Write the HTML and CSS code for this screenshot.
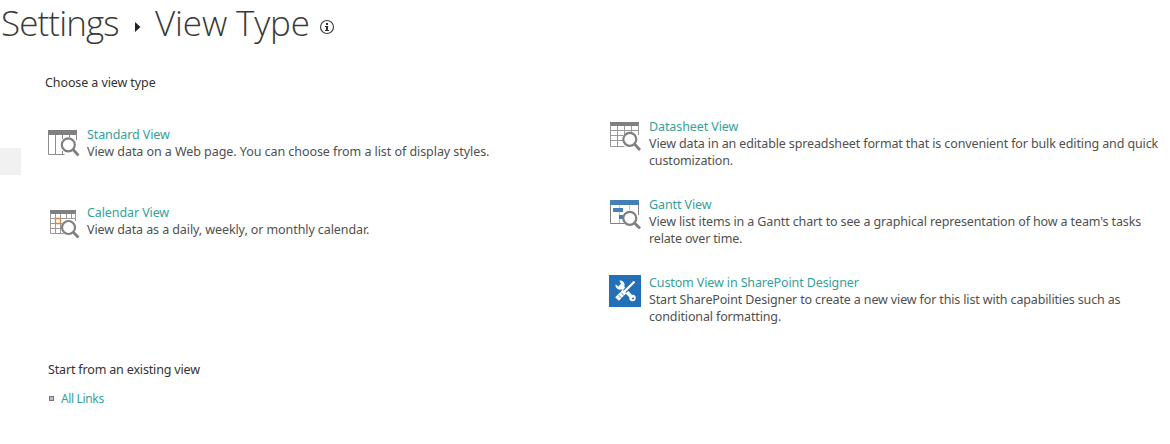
FILE: index.html
```html
<!DOCTYPE html>
<html lang="en">
<head>
<meta charset="utf-8">
<title>View Type</title>
<link rel="stylesheet" href="styles.css">
</head>
<body>
<header class="title">
  <span class="crumb">Settings</span>
  <svg class="arrow" width="6" height="10" viewBox="0 0 6 10"><path d="M0 0L5.500 5L0 10z" fill="#222"/></svg>
  <h1 class="page">View Type</h1>
  <svg class="info" width="16" height="16" viewBox="0 0 16 16"><circle cx="8" cy="8" r="6.500" fill="none" stroke="#444" stroke-width="1.200"/><path d="M7 4h2v2H7zM6 7h3v4h1v1H6v-1h1V8H6z" fill="#333"/></svg>
</header>
<div class="layout">
  <nav class="side"><div class="selected"></div></nav>
  <main class="content">
    <h2 class="heading">Choose a view type</h2>
    <div class="types">
      <div class="type left">
        <svg class="icon" width="32" height="32" viewBox="0 0 32 32">
          <path d="M0 2h29v5H0z" fill="#808080"/>
          <path d="M.5 6v20.500h16M28.500 6v6M7.500 7v19M14.500 7v4M14.500 23v3M21.500 7v2" fill="none" stroke="#8c8c8c"/>
          <circle cx="20.300" cy="16.800" r="6.500" fill="#fff" stroke="#808080" stroke-width="2.200"/><path d="M25 21.500L30.500 27.500" stroke="#808080" stroke-width="2.800"/>
        </svg>
        <div class="text"><a class="name n1">Standard View</a><p class="desc d1">View data on a Web page. You can choose from a list of display styles.</p></div>
      </div>
      <div class="type">
        <svg class="icon" width="32" height="32" viewBox="0 0 32 32">
          <path d="M1 3h29v4H1z" fill="#808080"/>
          <path d="M1.500 6v21.500h14M29.500 6v10M8.500 7v20M15.500 7v8M22.500 7v6M2 11.500h27M2 16.500h12M2 21.500h12" fill="none" stroke="#999"/>
          <circle cx="20.800" cy="20.300" r="6.500" fill="#fff" stroke="#808080" stroke-width="2.200"/><path d="M25.500 25L31 31" stroke="#808080" stroke-width="2.800"/>
        </svg>
        <div class="text"><a class="name n2">Datasheet View</a><p class="desc"><span class="d2">View data in an editable spreadsheet format that is convenient for bulk editing and quick</span><br><span class="d3">customization.</span></p></div>
      </div>
      <div class="type left">
        <svg class="icon" width="32" height="32" viewBox="0 0 32 32">
          <path d="M2 4h26v4H2z" fill="#808080"/>
          <path d="M2.500 7v20.500h13M27.500 7v8M7.500 8v19M12.500 8v19M18.500 8v5M23.500 8v5M3 12.500h25M3 17.500h11M3 22.500h11" fill="none" stroke="#999"/>
          <path d="M7.500 12.500h5v5h-5z" fill="#fff" stroke="#d08a45" stroke-width="1.300"/>
          <circle cx="20.500" cy="21.500" r="6.500" fill="#fff" stroke="#808080" stroke-width="2.200"/><path d="M25 26L30.500 31.500" stroke="#808080" stroke-width="2.800"/>
        </svg>
        <div class="text"><a class="name n3">Calendar View</a><p class="desc d4">View data as a daily, weekly, or monthly calendar.</p></div>
      </div>
      <div class="type">
        <svg class="icon" width="32" height="32" viewBox="0 0 32 32">
          <path d="M1 3h29v5H1z" fill="#447fb8"/>
          <path d="M1.500 8v18.500h14M29.500 8v10" fill="none" stroke="#808080"/>
          <path d="M10.500 8v18M20.500 8v5" stroke="#c5c5c5"/>
          <path d="M4 11h10v4H4zM10 18h4v4h-4z" fill="#447fb8"/>
          <circle cx="20.800" cy="21.300" r="6.500" fill="#fff" stroke="#808080" stroke-width="2.200"/><path d="M25.500 26L31 31.500" stroke="#808080" stroke-width="2.800"/>
        </svg>
        <div class="text"><a class="name n4">Gantt View</a><p class="desc"><span class="d5">View list items in a Gantt chart to see a graphical representation of how a team's tasks</span><br><span class="d6">relate over time.</span></p></div>
      </div>
      <div class="type last">
        <svg class="icon" width="32" height="32" viewBox="0 0 32 32">
          <path d="M0 0h32v32H0z" fill="#2470b8"/>
          <path d="M11 10l12.500 13" stroke="#fff" stroke-width="3.600"/>
          <path d="M10.300 5.500A4.600 4.600 0 1 1 6.500 9.300L9.500 11.500l2.500-2.500z" fill="#fff"/>
          <circle cx="23.500" cy="23" r="3.200" fill="#fff"/><circle cx="24" cy="23.500" r="1" fill="#2470b8"/>
          <path d="M25 7L15 17" stroke="#2470b8" stroke-width="4.500"/><path d="M25.500 6.500L15 17" stroke="#fff" stroke-width="2.300"/>
          <path d="M15.500 16.500l-7.500 7.500" stroke="#fff" stroke-width="5.200"/><path d="M12 17.500l3 3M9.500 20l3 3" stroke="#2470b8" stroke-width=".8"/>
        </svg>
        <div class="text"><a class="name n5">Custom View in SharePoint Designer</a><p class="desc"><span class="d7">Start SharePoint Designer to create a new view for this list with capabilities such as</span><br><span class="d8">conditional formatting.</span></p></div>
      </div>
    </div>
    <h2 class="heading existing">Start from an existing view</h2>
    <div class="link"><span class="bullet"></span><a class="name n6">All Links</a></div>
  </main>
</div>
</body>
</html>
```
FILE: styles.css
```css
body { margin: 0; width: 1170px; height: 444px; overflow: hidden; background: #fff; color: #505050; font: 12.5px/17px "Noto Sans", "Open Sans", sans-serif; }
h1, h2, p { margin: 0; font-weight: 400; font-size: inherit; }
.title { display: flex; height: 46px; padding-left: 1px; color: #3a3a3a; font: 300 35px/46px "Open Sans", sans-serif; white-space: nowrap; }
.crumb { width: 134px; letter-spacing: -.9px; }
.arrow { margin-top: 22px; width: 6px; }
.page { margin-left: 14px; width: 164px; font-weight: 300; letter-spacing: -.15px; }
.info { margin-top: 19px; }
.layout { display: grid; grid-template-columns: 45px 1fr; }
.selected { width: 21px; height: 27px; margin-top: 102px; background: #f1f1f1; }
.heading { padding-top: 28px; color: #333; white-space: nowrap; letter-spacing: -.1px; }
.types { display: grid; grid-template-columns: 561px 1fr; grid-auto-rows: 51px; row-gap: 27px; align-items: center; margin: 27px 0 0 3px; }
.type { display: flex; }
.type.left { padding-bottom: 2px; }
.type.last { grid-column: 2; }
.icon { flex: none; width: 32px; height: 32px; margin: 1px 8px 0 0; }
.left .icon { margin-right: 7px; margin-top: 2px; }
.text { white-space: nowrap; }
.name { color: #35a199; }
.text .name { display: block; width: max-content; letter-spacing: -.1px; }
.text .n5 { letter-spacing: -.12px; }
.n6 { font-size: 12px; letter-spacing: -.35px; }
.d1 { letter-spacing: -.06px; }
.d2, .d5 { letter-spacing: -.125px; }
.d3, .d7, .d8 { letter-spacing: -.145px; }
.d4 { letter-spacing: -.09px; }
.d6 { letter-spacing: -.16px; }
.existing { padding: 36px 0 0 3px; letter-spacing: -.16px; }
.link { display: flex; align-items: center; margin: 12px 0 0 4px; }
.bullet { box-sizing: border-box; width: 5px; height: 5px; margin-right: 7px; border: 1px solid #777; background: #bbb; }
```
